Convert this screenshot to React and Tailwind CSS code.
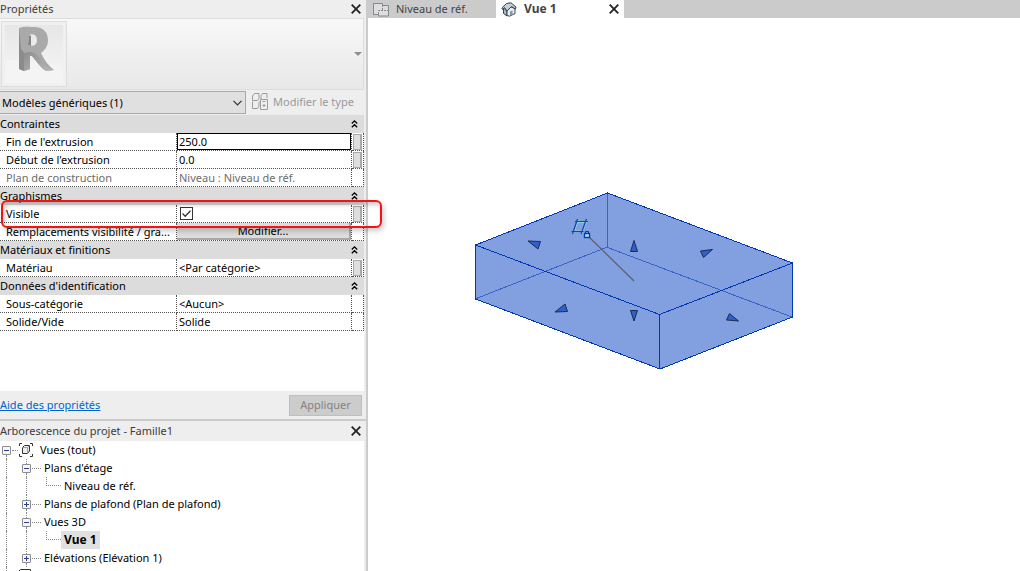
import React, { useState } from "react";

// property grid content, grouped by section
const sections = [
  {
    title: "Contraintes",
    rows: [
      { id: "fin", label: "Fin de l'extrusion", type: "input", value: "250.0", assoc: true, active: true },
      { id: "debut", label: "Début de l'extrusion", type: "input", value: "0.0", assoc: true },
      { id: "plan", label: "Plan de construction", type: "text", value: "Niveau : Niveau de réf.", muted: true },
    ],
  },
  {
    title: "Graphismes",
    rows: [
      { id: "visible", label: "Visible", type: "check", assoc: true },
      { id: "vis", label: "Remplacements visibilité / gra...", type: "button", value: "Modifier..." },
    ],
  },
  {
    title: "Matériaux et finitions",
    rows: [{ id: "mat", label: "Matériau", type: "text", value: "<Par catégorie>", assoc: true }],
  },
  {
    title: "Données d'identification",
    rows: [
      { id: "cat", label: "Sous-catégorie", type: "text", value: "<Aucun>" },
      { id: "solide", label: "Solide/Vide", type: "text", value: "Solide" },
    ],
  },
];

const views = [
  { label: "Plans d'étage", open: true, children: [{ label: "Niveau de réf." }] },
  { label: "Plans de plafond (Plan de plafond)", open: false },
  { label: "Vues 3D", open: true, children: [{ label: "Vue 1", current: true }] },
  { label: "Elévations (Elévation 1)", open: false },
];

function CloseIcon() {
  return (
    <svg width="10" height="10" viewBox="0 0 10 10" stroke="#222" strokeWidth="1.8" fill="none">
      <path d="M0.7 0.7 L9.3 9.3 M9.3 0.7 L0.7 9.3" />
    </svg>
  );
}

function CollapseIcon() {
  return (
    <svg width="7" height="8" viewBox="0 0 7 8" stroke="#000" strokeWidth="1.3" fill="none">
      <path d="M0.8 3.5 L3.5 0.9 L6.2 3.5 M0.8 7.3 L3.5 4.7 L6.2 7.3" />
    </svg>
  );
}

function RevitLogo() {
  return (
    <svg width="60" height="60" viewBox="0 0 60 60">
      <defs>
        <linearGradient id="wall" x1="0" y1="0" x2="0" y2="1">
          <stop offset="0" stopColor="#e6e6e6" />
          <stop offset="1" stopColor="#f3f3f3" />
        </linearGradient>
        <linearGradient id="leg" x1="0" y1="0" x2="1" y2="1">
          <stop offset="0" stopColor="#8e8e8e" />
          <stop offset="1" stopColor="#b9b9b9" />
        </linearGradient>
      </defs>
      <path d="M1 1 H59 V45 L30 38 L1 37 Z" fill="url(#wall)" />
      <path d="M1 37 L30 36 L59 45 V59 H1 Z" fill="#f4f4f4" />
      <path
        fillRule="evenodd"
        d="M15 4 C20 2 26 3 30 3 C40 3 44 9 44 16 C44 22 41 26 37 29 C40 36 45 42 50 46 L42 47 C36 43 33 38 28 32 L26 32 L26 45 L20 47 L15 45 Z M25 11 L24 21 C29 23 33 21 33 16 C33 11 29 9 25 11 Z"
        fill="#a9a9a9"
      />
      <path d="M15 4 L17 25 L21 30 L20 47 L15 45 Z" fill="#8b8b8b" />
      <path d="M21 29 C28 26 34 30 37 36 C40 42 46 45 50 46 L42 47 C36 43 33 38 28 32 L26 32 L26 45 L20 47 Z" fill="url(#leg)" />
      <path d="M25 11 L27 12 L27 22 L24 21 Z" fill="#858585" />
    </svg>
  );
}

function EditTypeIcon() {
  return (
    <svg width="17" height="17" viewBox="0 0 17 17" stroke="#9c9c9c" fill="none">
      <path d="M0.5 7.5 V3 L2.5 0.5 H7 V5.5 L5.5 7.5 Z M9 6 V2.5 L10.5 0.5 H15 V5 M0.5 8.5 V15.5 H5.5 L7 13 V8.5" />
      <path d="M8.5 6.5 H15.5 V16.5 H8.5 Z M10.5 8.5 H13.5" />
      <path d="M10.5 12.5 H13.5 M12 11 V14" />
    </svg>
  );
}

function PlanIcon() {
  return (
    <svg width="17" height="15" viewBox="0 0 17 15" stroke="#84898e" fill="#dedede">
      <path d="M0.5 1.5 H9.5 V3.5 H15.5 V14 H5.5 V12.5 H0.5 Z" />
      <path d="M9.5 3 V8 M5.5 12 V8.5 H15" strokeDasharray="2 1" fill="none" />
    </svg>
  );
}

function HouseIcon() {
  return (
    <svg width="16" height="15" viewBox="0 0 16 15" stroke="#39434f" strokeLinejoin="round">
      <path d="M2.5 6 L6 9 V14 L2.5 11.5 Z" fill="#aeb8c4" />
      <path d="M6 8 L10 5 L14 6.5 V11.5 L8.5 14.2 L6 13.5 Z" fill="#e8edf2" />
      <path d="M0.8 6 L5.5 1.5 L10 0.8 L15 5 L14.5 7 L10.5 4.5 L6 9 L3.5 5.5 L1.5 7.5 Z" fill="#c5cfda" />
      <path d="M9 9.5 L11.5 8.5 V12.5 L9 13.5 Z" fill="#8794a3" stroke="none" />
    </svg>
  );
}

function ViewsIcon() {
  return (
    <svg width="14" height="14" viewBox="0 0 14 14" stroke="#333" fill="none">
      <path d="M3 0.5 H0.5 V3 M11 0.5 H13.5 V3 M3 13.5 H0.5 V11 M11 13.5 H13.5 V11" />
      <path d="M3.5 4.5 L5.5 2.5 H10.5 V8 L8.5 10.5 H3.5 Z" fill="#eceff2" />
      <path d="M3.5 4.5 H8.5 V10.5 M8.5 4.5 L10.5 2.5" stroke="#9aa1a8" />
    </svg>
  );
}

function PanelTitle({ children }) {
  return (
    <div className="flex items-center justify-between pr-[5px] text-[#3c3c3c]">
      <h2>{children}</h2>
      <button aria-label="Fermer">
        <CloseIcon />
      </button>
    </div>
  );
}

function Value({ row }) {
  const [value, setValue] = useState(row.value ?? "");
  const [checked, setChecked] = useState(true);

  if (row.type === "input") {
    return (
      <input
        id={row.id}
        value={value}
        onChange={(e) => setValue(e.target.value)}
        className={`block h-[17px] w-full border px-px leading-4 outline-none ${row.active ? "border-black" : "border-transparent"}`}
      />
    );
  }
  if (row.type === "check") {
    return (
      <span className="ml-[3px] grid w-[13px]">
        <input
          id={row.id}
          type="checkbox"
          checked={checked}
          onChange={(e) => setChecked(e.target.checked)}
          className="col-start-1 row-start-1 size-[13px] appearance-none border border-[#333] bg-white"
        />
        {checked && (
          <svg className="pointer-events-none col-start-1 row-start-1" width="13" height="13" viewBox="0 0 13 13" fill="none" stroke="#333" strokeWidth="1.3">
            <path d="M2.5 6.5 L5.2 9.2 L10.5 3.7" />
          </svg>
        )}
      </span>
    );
  }
  if (row.type === "button") {
    return (
      <button id={row.id} className="block h-[17px] w-full border-r-2 border-b-2 border-[#a8a8a8] bg-[#dcdcdc] leading-4">
        {row.value}
      </button>
    );
  }
  return <span className="block px-0.5">{row.value}</span>;
}

function PropertyGrid() {
  const cell = "h-[18px] border-r border-b border-dotted border-[#555] p-0";
  return (
    <div className="relative mr-0.5 bg-white pb-[60px]">
      <table className="w-full table-fixed border-separate border-spacing-0 text-left">
        <colgroup>
          <col className="w-[177px]" />
          <col />
          <col className="w-3" />
        </colgroup>
        {sections.map((s) => (
          <tbody key={s.title}>
            <tr className="bg-[#dcdcdc]">
              <th colSpan="3" className="h-[18px] p-0 font-normal">
                <div className="flex items-center justify-between pr-1.5">
                  {s.title}
                  <button aria-label={`Réduire ${s.title}`}>
                    <CollapseIcon />
                  </button>
                </div>
              </th>
            </tr>
            {s.rows.map((row) => (
              <tr key={row.id} className={row.muted ? "text-[#6d6d6d]" : ""}>
                <td className={cell}>
                  <label htmlFor={row.id} className="block pl-1.5 whitespace-nowrap">
                    {row.label}
                  </label>
                </td>
                <td className={cell}>
                  <Value row={row} />
                </td>
                <td className={cell}>
                  {row.assoc && (
                    <button
                      aria-label="Associer un paramètre"
                      className="mx-auto block h-4 w-[9px] border border-r-2 border-[#aaa] bg-[#dedede]"
                    />
                  )}
                </td>
              </tr>
            ))}
          </tbody>
        ))}
      </table>

      {/* callout around the Visible row */}
      <div className="pointer-events-none absolute top-[85px] left-px h-[28px] w-[381px] rounded-[6px] border-2 border-[#f01414] shadow-[2px_3px_5px_rgba(0,0,0,0.2),inset_2px_3px_4px_rgba(0,0,0,0.2)]" />
    </div>
  );
}

// expander with the dotted connector running above and below it
function Toggle({ open, top = true, bottom = true }) {
  return (
    <span className="flex h-full w-[9px] flex-col items-center">
      <span className={`w-px flex-1 ${top ? "border-l border-dotted border-[#888]" : ""}`} />
      <button
        aria-label={open ? "Réduire" : "Développer"}
        className="flex size-[9px] items-center justify-center rounded-[1px] border border-[#8c8c8c] bg-[#f6f6f6]"
      >
        <svg width="5" height="5" viewBox="0 0 5 5" stroke="#2a3f8f">
          <path d={open ? "M0 2.5 H5" : "M0 2.5 H5 M2.5 0 V5"} />
        </svg>
      </button>
      <span className={`w-px flex-1 ${bottom ? "border-l border-dotted border-[#888]" : ""}`} />
    </span>
  );
}

function ProjectTree() {
  const guide = "h-full border-l border-dotted border-[#888]";
  return (
    <ul className="mr-0.5 min-h-0 flex-1 overflow-hidden bg-white">
      <li>
        <div className="flex h-[18px] items-center pl-0.5">
          <Toggle open top={false} />
          <span className="mx-px w-1.5 border-t border-dotted border-[#888]" />
          <ViewsIcon />
          <span className="pl-[7px]">Vues (tout)</span>
        </div>
        <ul>
          {views.map((v) => (
            <li key={v.label}>
              <div className="flex h-[18px] items-center pl-1.5">
                <span className={`${guide} w-4`} />
                <Toggle open={v.open} />
                <span className="mr-[3px] ml-px w-[9px] border-t border-dotted border-[#888]" />
                <span>{v.label}</span>
              </div>
              {v.children && (
                <ul>
                  {v.children.map((c) => (
                    <li key={c.label} className="flex h-[18px] items-center pl-1.5">
                      <span className={`${guide} w-5`} />
                      <span className={`${guide} w-5`} />
                      <span className="h-[9px] w-[15px] self-start border-b border-l border-dotted border-[#888]" />
                      <span className={`px-[3px] ${c.current ? "bg-[#e0e0e0] text-[12px] leading-[18px] font-bold" : ""}`}>
                        {c.label}
                      </span>
                    </li>
                  ))}
                </ul>
              )}
            </li>
          ))}
        </ul>
      </li>
      <li className="flex h-[18px] items-center pl-1.5">
        <span className={`${guide} w-3`} />
        <svg width="14" height="14" viewBox="0 0 14 14" stroke="#333" fill="#fff">
          <path d="M0.5 2.5 L2.5 0.5 H12.5 V13.5 H0.5 Z" />
        </svg>
      </li>
    </ul>
  );
}

function Extrusion() {
  const arrows = [
    "528,241 540.5,241.5 538,249",
    "555,312 565,304 567.5,311.5",
    "634,240.5 637.5,251.5 630.5,251.5",
    "630.5,310.5 637.5,310.5 634,321",
    "700.5,251 712.5,249.5 703.5,257.5",
    "729.5,313.5 738.5,321 726.5,320",
  ];
  return (
    <svg className="absolute top-[170px] left-[102px]" width="328" height="186" viewBox="470 188 328 186" fill="none">
      <polygon points="475,245 607,193 792,263 792,317 660,369 475,299" fill="#829fdf" />
      <g stroke="#3a63c9" shapeRendering="crispEdges">
        <path d="M607.5 193 V247 L475 299 M607.5 247.5 L792 317" />
      </g>
      <g stroke="#0037b5" shapeRendering="crispEdges">
        <path d="M475.5 245 L607.5 193 L792.5 263 V317 L660 369 L475.5 299 Z" />
        <path d="M475.5 245 L659.5 314.5 L792.5 263 M659.5 314.5 V369" />
      </g>
      <path d="M588 236 L634 281" stroke="#5b5f6e" strokeWidth="1.2" />
      {arrows.map((p) => (
        <polygon key={p} points={p} fill="#2f5fcb" stroke="#1c2c58" />
      ))}
      <path d="M576 222.5 H587 M572.5 231 H583 M578.5 220 L573.5 233.5 M587 220 L582 233.5" stroke="#8ed3d8" />
      <path d="M575 221.5 H588 M571.5 231.5 H583.5 M577.5 219 L572.5 234 M586.5 219 L581 234" stroke="#0a45b8" strokeWidth="1.2" />
      <rect x="584.5" y="233.5" width="5" height="4" fill="#9fe0f0" stroke="#0037b5" strokeWidth="1.3" />
      <path d="M585.5 233 V231.5 H588.5 V233" stroke="#0037b5" />
    </svg>
  );
}

export default function App() {
  return (
    <div className="flex h-screen overflow-hidden bg-white font-['Noto_Sans','Open_Sans',sans-serif] text-[11px] leading-4 text-black">
      <aside className="z-10 flex w-[368px] shrink-0 flex-col border-r-2 border-[#cbcbcb] bg-[#eee]">
        <section className="border-b-2 border-[#cbcbcb]">
          <div className="py-px">
            <PanelTitle>Propriétés</PanelTitle>
          </div>
          <div className="mr-0.5 flex h-[72px] items-center justify-between border border-l-0 border-[#ddd] bg-linear-to-b from-[#f8f8f8] to-[#e8e8e8] pr-px pl-px">
            <div className="border border-[#ddd] bg-[#f0f0f0] p-0.5">
              <RevitLogo />
            </div>
            <button aria-label="Sélecteur de type">
              <svg width="8" height="4" viewBox="0 0 8 4" fill="#8f8f8f">
                <path d="M0 0 H8 L4 4 Z" />
              </svg>
            </button>
          </div>
          <div className="flex items-center gap-1.5 py-px">
            <div className="grid w-[246px] items-center">
              <select
                aria-label="Filtre"
                className="col-start-1 row-start-1 h-[23px] appearance-none border border-l-0 border-[#a9a9a9] bg-[#e0e0e0] pl-0.5"
              >
                <option>Modèles génériques (1)</option>
              </select>
              <svg className="pointer-events-none col-start-1 row-start-1 mr-1 justify-self-end" width="9" height="6" viewBox="0 0 9 6" fill="none" stroke="#333" strokeWidth="1.2">
                <path d="M0.5 0.8 L4.5 4.8 L8.5 0.8" />
              </svg>
            </div>
            <button disabled className="flex items-center gap-1 pb-0.5 text-[#9a9a9a]">
              <EditTypeIcon />
              Modifier le type
            </button>
          </div>
          <PropertyGrid />
          <div className="flex h-7 items-center justify-between pr-1">
            <a href="#aide" className="text-[#0066cc] underline">
              Aide des propriétés
            </a>
            <button disabled className="h-[21px] w-[73px] border border-[#bfbfbf] bg-[#cccccc] text-[#838383]">
              Appliquer
            </button>
          </div>
        </section>

        <section className="flex min-h-0 flex-1 flex-col">
          <div className="py-0.5">
            <PanelTitle>Arborescence du projet - Famille1</PanelTitle>
          </div>
          <ProjectTree />
        </section>
      </aside>

      <main className="flex min-w-0 flex-1 flex-col">
        <nav className="flex h-[18px] bg-[#cbcbcb] text-[#444]">
          <button className="flex w-32 items-center gap-1.5 pl-[5px]">
            <PlanIcon />
            Niveau de réf.
          </button>
          <div className="flex w-32 items-center justify-between bg-white pr-[5px] pl-[5px]">
            <button className="flex items-center gap-[7px] text-[12px] font-bold">
              <HouseIcon />
              Vue 1
            </button>
            <button aria-label="Fermer la vue">
              <CloseIcon />
            </button>
          </div>
        </nav>
        <div className="relative flex-1 overflow-hidden bg-white">
          <Extrusion />
        </div>
      </main>
    </div>
  );
}
